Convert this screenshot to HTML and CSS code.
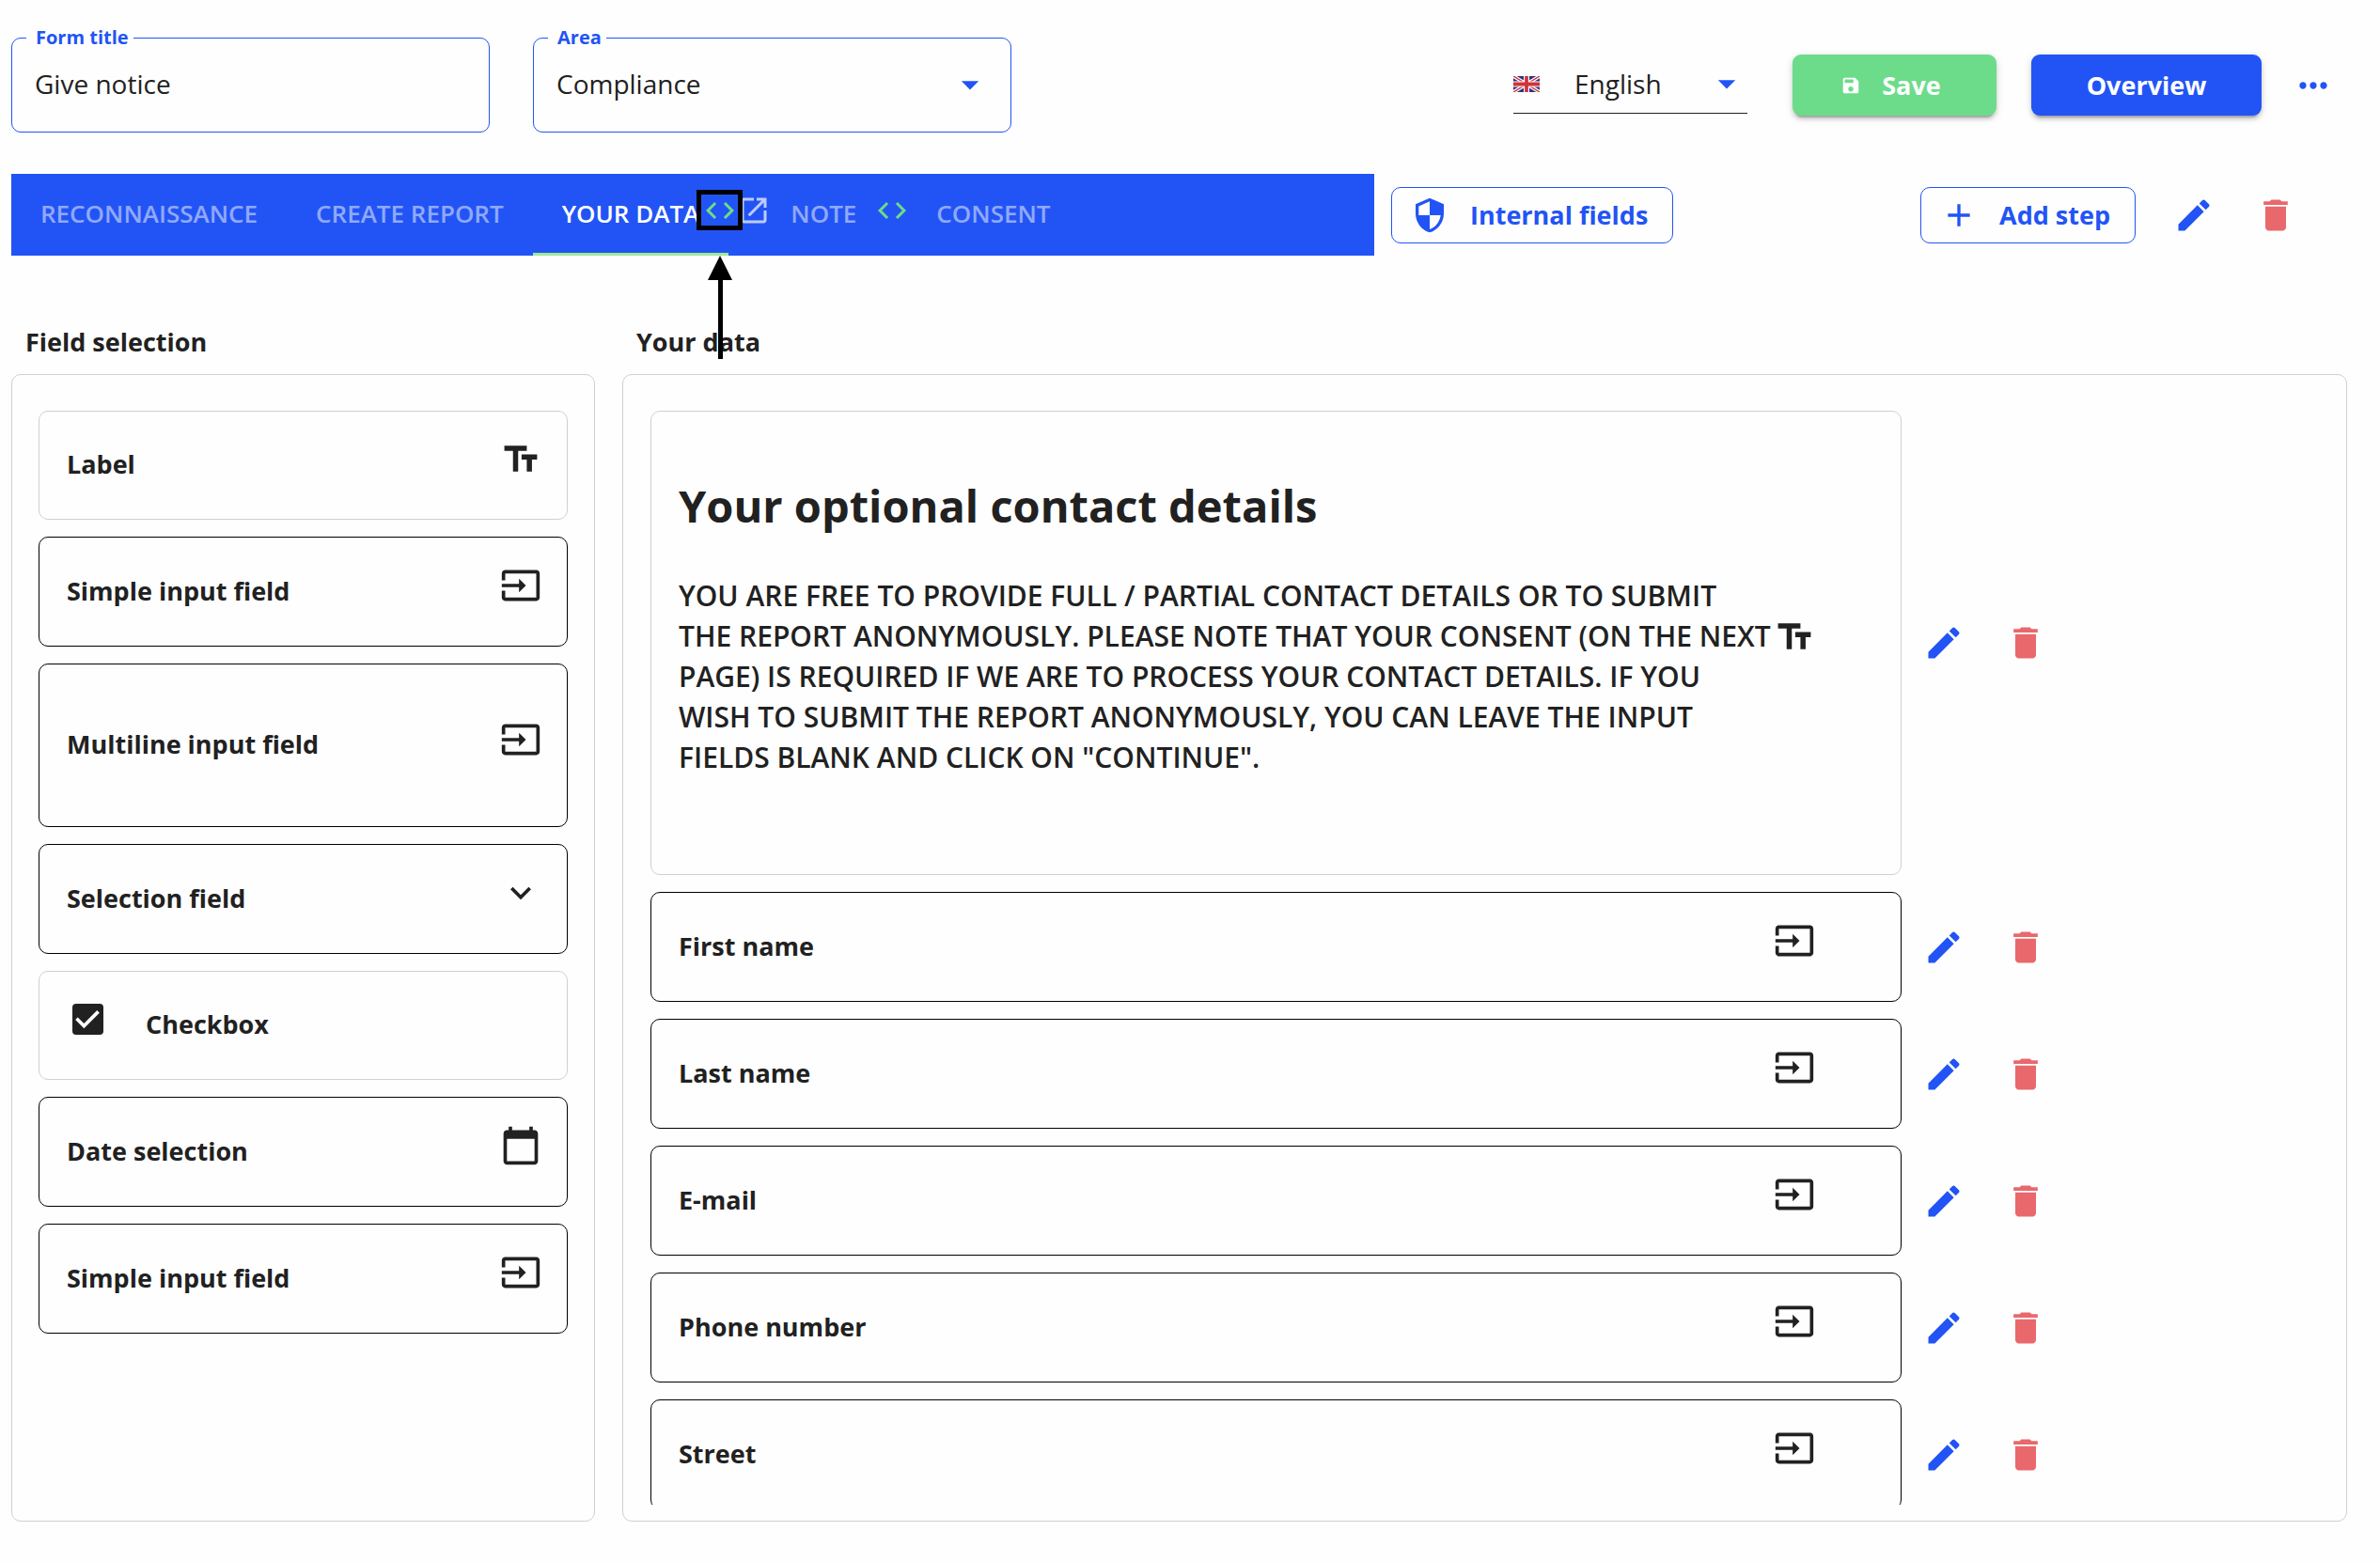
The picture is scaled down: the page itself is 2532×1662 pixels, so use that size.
FILE: index.html
```html
<!DOCTYPE html>
<html lang="en">
<head>
<meta charset="utf-8">
<meta name="viewport" content="width=device-width, initial-scale=1">
<title>Form editor</title>
<link rel="stylesheet" href="styles.css">
</head>
<body>
<svg class="sprite" aria-hidden="true">
  <symbol id="drop" viewBox="0 0 24 24"><path d="M7 10l5 5 5-5z"/></symbol>
  <symbol id="save" viewBox="0 0 24 24"><path d="M17 3H5c-1.110 0-2 .9-2 2v14c0 1.100.890 2 2 2h14c1.100 0 2-.9 2-2V7l-4-4zm-5 16c-1.660 0-3-1.340-3-3s1.340-3 3-3 3 1.340 3 3-1.340 3-3 3zm3-10H5V5h10v4z"/></symbol>
  <symbol id="more" viewBox="0 0 24 24"><path d="M6 10c-1.100 0-2 .9-2 2s.9 2 2 2 2-.9 2-2-.9-2-2-2zm12 0c-1.100 0-2 .9-2 2s.9 2 2 2 2-.9 2-2-.9-2-2-2zm-6 0c-1.100 0-2 .9-2 2s.9 2 2 2 2-.9 2-2-.9-2-2-2z"/></symbol>
  <symbol id="code" viewBox="0 0 24 24"><path d="M9.400 16.600L4.800 12l4.600-4.600L8 6l-6 6 6 6 1.400-1.400zm5.200 0l4.600-4.600-4.600-4.600L16 6l6 6-6 6-1.400-1.400z"/></symbol>
  <symbol id="open" viewBox="0 0 24 24"><path d="M19 19H5V5h7V3H5c-1.110 0-2 .9-2 2v14c0 1.100.890 2 2 2h14c1.100 0 2-.9 2-2v-7h-2v7zM14 3v2h3.590l-9.830 9.830 1.410 1.410L19 6.410V10h2V3h-7z"/></symbol>
  <symbol id="shield" viewBox="0 0 24 24"><path d="M12 1L3 5v6c0 5.550 3.840 10.740 9 12 5.160-1.260 9-6.450 9-12V5l-9-4zm0 10.990h7c-.53 4.120-3.280 7.790-7 8.940V12H5V6.300l7-3.110v8.800z"/></symbol>
  <symbol id="plus" viewBox="0 0 24 24"><path d="M19 13h-6v6h-2v-6H5v-2h6V5h2v6h6v2z"/></symbol>
  <symbol id="edit" viewBox="0 0 24 24"><path d="M3 17.250V21h3.750L17.810 9.940l-3.750-3.750L3 17.250zM20.710 7.040c.39-.39.39-1.020 0-1.410l-2.340-2.340c-.39-.39-1.020-.39-1.410 0l-1.830 1.830 3.750 3.750 1.830-1.830z"/></symbol>
  <symbol id="trash" viewBox="0 0 24 24"><path d="M6 19c0 1.100.9 2 2 2h8c1.100 0 2-.9 2-2V7H6v12zM19 4h-3.500l-1-1h-5l-1 1H5v2h14V4z"/></symbol>
  <symbol id="text" viewBox="0 0 24 24"><path d="M2.500 4v3h5v12h3V7h5V4h-13zm19 5h-9v3h3v7h3v-7h3V9z"/></symbol>
  <symbol id="input" viewBox="0 0 24 24"><path d="M21 3.010H3c-1.100 0-2 .9-2 2V9h2V4.990h18v14.030H3V15H1v4.010c0 1.100.9 1.980 2 1.980h18c1.100 0 2-.88 2-1.980v-14c0-1.110-.9-2-2-2zM11 16l4-4-4-4v3H1v2h10v3z"/></symbol>
  <symbol id="chevron" viewBox="0 0 24 24"><path d="M7.410 8.590L12 13.170l4.590-4.580L18 10l-6 6-6-6 1.410-1.410z"/></symbol>
  <symbol id="calendar" viewBox="0 0 24 24"><path d="M20 3h-1V1h-2v2H7V1H5v2H4c-1.100 0-2 .9-2 2v16c0 1.100.9 2 2 2h16c1.100 0 2-.9 2-2V5c0-1.100-.9-2-2-2zm0 18H4V8h16v13z"/></symbol>
  <symbol id="tick" viewBox="0 0 24 24"><path d="M10 17l-5-5 1.410-1.410L10 14.170l7.590-7.590L19 8l-9 9z"/></symbol>
</svg>

<header class="topbar">
  <fieldset class="outlined">
    <legend><label for="title">Form title</label></legend>
    <input id="title" class="control" type="text" value="Give notice">
  </fieldset>
  <fieldset class="outlined">
    <legend><label for="area">Area</label></legend>
    <div class="picker">
      <select id="area" class="control"><option>Compliance</option></select>
      <svg class="icon picker-arrow"><use href="#drop"/></svg>
    </div>
  </fieldset>
  <div class="topbar-actions">
    <div class="language">
      <svg class="flag" viewBox="0 0 60 36" preserveAspectRatio="none">
        <path fill="#2e3180" d="M0 0h60v36H0z"/>
        <path stroke="#fff" stroke-width="8" d="M0 0l60 36M60 0L0 36"/>
        <path stroke="#d0333a" stroke-width="3" d="M0 0l60 36M60 0L0 36"/>
        <path stroke="#fff" stroke-width="13" d="M30 0v36M0 18h60"/>
        <path stroke="#d0333a" stroke-width="8" d="M30 0v36M0 18h60"/>
      </svg>
      <select class="language-select" aria-label="Language"><option>English</option></select>
      <svg class="icon picker-arrow"><use href="#drop"/></svg>
    </div>
    <button class="button save"><svg class="icon-small"><use href="#save"/></svg>Save</button>
    <button class="button overview">Overview</button>
    <button class="icon-button more" aria-label="More"><svg class="icon"><use href="#more"/></svg></button>
  </div>
</header>

<div class="steps">
  <nav class="tabs">
    <button class="tab">RECONNAISSANCE</button>
    <button class="tab">CREATE REPORT</button>
    <button class="tab active">YOUR DATA</button>
    <span class="condition marked">
      <svg class="icon-mid"><use href="#code"/></svg>
      <svg class="pointer" viewBox="0 0 26 110"><path d="M13 0l13 26H16v84h-5V26H0z"/></svg>
    </span>
    <svg class="icon-mid open"><use href="#open"/></svg>
    <button class="tab after-open">NOTE</button>
    <span class="condition"><svg class="icon-mid"><use href="#code"/></svg></span>
    <button class="tab">CONSENT</button>
  </nav>
  <button class="button-outline"><svg class="icon-button-lead"><use href="#shield"/></svg>Internal fields</button>
  <div class="step-actions">
    <button class="button-outline"><svg class="icon-button-lead"><use href="#plus"/></svg>Add step</button>
    <div class="actions">
      <button class="icon-button edit" aria-label="Edit step"><svg class="icon"><use href="#edit"/></svg></button>
      <button class="icon-button delete" aria-label="Delete step"><svg class="icon"><use href="#trash"/></svg></button>
    </div>
  </div>
</div>

<main class="workspace">
  <section class="column">
    <h2>Field selection</h2>
    <div class="panel palette">
      <div class="card plain"><span>Label</span><svg class="icon"><use href="#text"/></svg></div>
      <div class="card"><span>Simple input field</span><svg class="icon"><use href="#input"/></svg></div>
      <div class="card multiline"><span>Multiline input field</span><svg class="icon"><use href="#input"/></svg></div>
      <div class="card"><span>Selection field</span><svg class="icon"><use href="#chevron"/></svg></div>
      <div class="card plain check">
        <span class="tickbox"><input id="check" type="checkbox" checked><svg class="icon"><use href="#tick"/></svg></span>
        <label for="check">Checkbox</label>
      </div>
      <div class="card"><span>Date selection</span><svg class="icon"><use href="#calendar"/></svg></div>
      <div class="card"><span>Simple input field</span><svg class="icon"><use href="#input"/></svg></div>
    </div>
  </section>

  <section class="column">
    <h2>Your data</h2>
    <div class="panel form">
      <div class="form-list">
        <div class="row">
          <div class="card plain intro">
            <div class="intro-text">
              <h1>Your optional contact details</h1>
              <p>YOU ARE FREE TO PROVIDE FULL / PARTIAL CONTACT DETAILS OR TO SUBMIT THE REPORT ANONYMOUSLY. PLEASE NOTE THAT YOUR CONSENT (ON THE NEXT PAGE) IS REQUIRED IF WE ARE TO PROCESS YOUR CONTACT DETAILS. IF YOU WISH TO SUBMIT THE REPORT ANONYMOUSLY, YOU CAN LEAVE THE INPUT FIELDS BLANK AND CLICK ON "CONTINUE".</p>
            </div>
            <svg class="icon"><use href="#text"/></svg>
          </div>
          <div class="actions">
            <button class="icon-button edit" aria-label="Edit text"><svg class="icon"><use href="#edit"/></svg></button>
            <button class="icon-button delete" aria-label="Delete text"><svg class="icon"><use href="#trash"/></svg></button>
          </div>
        </div>
        <div class="row">
          <div class="card"><span>First name</span><svg class="icon"><use href="#input"/></svg></div>
          <div class="actions">
            <button class="icon-button edit" aria-label="Edit first name"><svg class="icon"><use href="#edit"/></svg></button>
            <button class="icon-button delete" aria-label="Delete first name"><svg class="icon"><use href="#trash"/></svg></button>
          </div>
        </div>
        <div class="row">
          <div class="card"><span>Last name</span><svg class="icon"><use href="#input"/></svg></div>
          <div class="actions">
            <button class="icon-button edit" aria-label="Edit last name"><svg class="icon"><use href="#edit"/></svg></button>
            <button class="icon-button delete" aria-label="Delete last name"><svg class="icon"><use href="#trash"/></svg></button>
          </div>
        </div>
        <div class="row">
          <div class="card"><span>E-mail</span><svg class="icon"><use href="#input"/></svg></div>
          <div class="actions">
            <button class="icon-button edit" aria-label="Edit e-mail"><svg class="icon"><use href="#edit"/></svg></button>
            <button class="icon-button delete" aria-label="Delete e-mail"><svg class="icon"><use href="#trash"/></svg></button>
          </div>
        </div>
        <div class="row">
          <div class="card"><span>Phone number</span><svg class="icon"><use href="#input"/></svg></div>
          <div class="actions">
            <button class="icon-button edit" aria-label="Edit phone number"><svg class="icon"><use href="#edit"/></svg></button>
            <button class="icon-button delete" aria-label="Delete phone number"><svg class="icon"><use href="#trash"/></svg></button>
          </div>
        </div>
        <div class="row">
          <div class="card"><span>Street</span><svg class="icon"><use href="#input"/></svg></div>
          <div class="actions">
            <button class="icon-button edit" aria-label="Edit street"><svg class="icon"><use href="#edit"/></svg></button>
            <button class="icon-button delete" aria-label="Delete street"><svg class="icon"><use href="#trash"/></svg></button>
          </div>
        </div>
      </div>
    </div>
  </section>
</main>
</body>
</html>
```
FILE: styles.css
```css
:root {
  --blue: #2254f5;
  --green: #6cdc8a;
  --red: #e9686c;
  --ink: #212121;
  --line: #d0d0d0;
}

* { box-sizing: border-box; }

body {
  margin: 0;
  height: 100vh;
  padding: 26px 35px 43px 12px;
  display: flex;
  flex-direction: column;
  background: #fefefe;
  color: var(--ink);
  font: 400 28px/40px "Open Sans", "Noto Sans", sans-serif;
}

button, input, select { font: inherit; color: inherit; }
button { border: 0; background: none; padding: 0; cursor: pointer; }
svg { display: block; flex: none; fill: currentColor; }

.sprite { position: absolute; width: 0; height: 0; }
.icon { width: 44px; height: 44px; }
.icon-button-lead { width: 40px; height: 40px; }
.icon-mid { width: 36px; height: 36px; }
.icon-small { width: 22px; height: 22px; }

/* Top bar */
.topbar { display: flex; gap: 46px; align-items: flex-start; }

.outlined {
  flex: 0 1 509px;
  min-width: 0;
  height: 115px;
  margin: 0;
  padding: 0;
  border: 1px solid var(--blue);
  border-radius: 10px;
}
.outlined legend {
  margin-left: 15px;
  padding: 0 5px 0 10px;
  color: var(--blue);
  font-size: 20px;
  font-weight: 700;
  line-height: 28px;
}
.control {
  appearance: none;
  display: block;
  width: 100%;
  padding: 15px 24px 31px;
  border: 0;
  background: none;
  outline: 0;
  line-height: 40px;
  height: 86px;
}
.picker { display: flex; align-items: flex-start; }
.picker-arrow { color: var(--blue); margin-left: -44px; pointer-events: none; }
.picker .picker-arrow { margin: 14px 21px 0 -65px; }

.topbar-actions {
  display: flex;
  align-items: flex-start;
  margin-left: auto;
  padding-top: 32px;
}
.language {
  display: flex;
  align-items: center;
  width: 249px;
  height: 63px;
  margin-right: 48px;
  border-bottom: 1px solid var(--ink);
}
.flag { width: 28px; height: 17px; fill: none; }
.language-select {
  appearance: none;
  flex: 1;
  min-width: 0;
  height: 60px;
  padding: 0 0 0 37px;
  border: 0;
  background: none;
}

.button {
  display: flex;
  align-items: center;
  justify-content: center;
  height: 65px;
  border-radius: 9px;
  color: #fff;
  font-size: 27px;
  font-weight: 700;
  box-shadow: 0 6px 2px -4px rgba(0,0,0,.2), 0 4px 4px rgba(0,0,0,.14), 0 2px 10px rgba(0,0,0,.12);
}
.save { background: var(--green); gap: 22px; min-width: 217px; padding-right: 8px; margin-right: 37px; }
.overview { background: var(--blue); min-width: 245px; }
.icon-button { display: flex; align-items: center; justify-content: center; width: 44px; height: 44px; }
.more { height: 65px; margin: 0 14px 0 33px; color: var(--blue); }

/* Step tabs */
.steps { display: flex; align-items: center; gap: 18px; margin-top: 44px; }

.tabs {
  flex: 0 1 1450px;
  display: flex;
  align-items: center;
  height: 87px;
  background: var(--blue);
}
.tab {
  height: 87px;
  padding: 0 31px;
  border-bottom: 3px solid transparent;
  color: rgba(255,255,255,.5);
  font-size: 26px;
  font-weight: 600;
  white-space: nowrap;
}
.tab.active { color: #fff; border-bottom-color: #a0e89a; }
.condition { margin: 0 -2px 10px -11px; color: var(--green); }
.marked { position: relative; margin: 0 0 10px -27px; }
.marked::before {
  content: "";
  position: absolute;
  inset: -4px -6px -3px -7px;
  border: 5px solid #000;
}
.pointer {
  position: absolute;
  top: 66px;
  left: 5px;
  width: 26px;
  height: 110px;
  color: #000;
}
.open { color: rgba(255,255,255,.7); margin-bottom: 10px; }
.after-open { margin-left: -10px; }

.button-outline {
  display: flex;
  align-items: center;
  gap: 23px;
  height: 60px;
  padding: 0 26px 0 20px;
  border: 1px solid var(--blue);
  border-radius: 10px;
  color: var(--blue);
  font-size: 27px;
  font-weight: 700;
  white-space: nowrap;
}
.step-actions { display: flex; align-items: center; gap: 40px; margin: 0 54px 0 auto; }
.actions { display: flex; gap: 43px; }
.edit { color: var(--blue); }
.delete { color: var(--red); }

/* Workspace */
.workspace {
  flex: 1;
  min-height: 0;
  display: grid;
  grid-template-columns: 621fr 1835fr;
  gap: 29px;
  margin-top: 72px;
}
.column { display: flex; flex-direction: column; min-width: 0; min-height: 0; }
h2 { margin: 0 0 14px; padding-left: 15px; font-size: 27px; font-weight: 700; line-height: 40px; }

.panel { flex: 1; min-height: 0; border: 1px solid var(--line); border-radius: 10px; }
.palette { display: flex; flex-direction: column; gap: 18px; padding: 38px 28px; }
.form { padding: 38px 29px 17px; }
.form-list { display: flex; flex-direction: column; gap: 18px; height: 100%; overflow: hidden; }

.card {
  flex: none;
  display: flex;
  align-items: center;
  justify-content: space-between;
  height: 117px;
  padding: 0 27px 2px 29px;
  border: 1px solid #000;
  border-radius: 10px;
  font-size: 27px;
  font-weight: 700;
}
.card > .icon, .tickbox { margin-bottom: 11px; }
.card.plain { height: 116px; border-color: var(--line); }
.card.multiline { height: 174px; }
.card.check { justify-content: flex-start; gap: 40px; }

.tickbox { display: grid; place-items: center; color: #fff; }
.tickbox > * { grid-area: 1 / 1; }
.tickbox input {
  appearance: none;
  width: 33px;
  height: 33px;
  margin: 0;
  border-radius: 4px;
  background: var(--ink);
}
.tickbox .icon { pointer-events: none; }

.row { flex: none; display: flex; align-items: center; gap: 23px; }
.row .card { width: 75%; padding-right: 91px; }
.row .card.intro { height: auto; }
.intro-text { flex: 1; min-width: 0; padding: 70px 0 101px; }
h1 { margin: 0 0 44px; font-size: 47px; font-weight: 700; line-height: 60px; }
p { margin: 0; font-size: 30px; font-weight: 600; line-height: 43px; }
```
